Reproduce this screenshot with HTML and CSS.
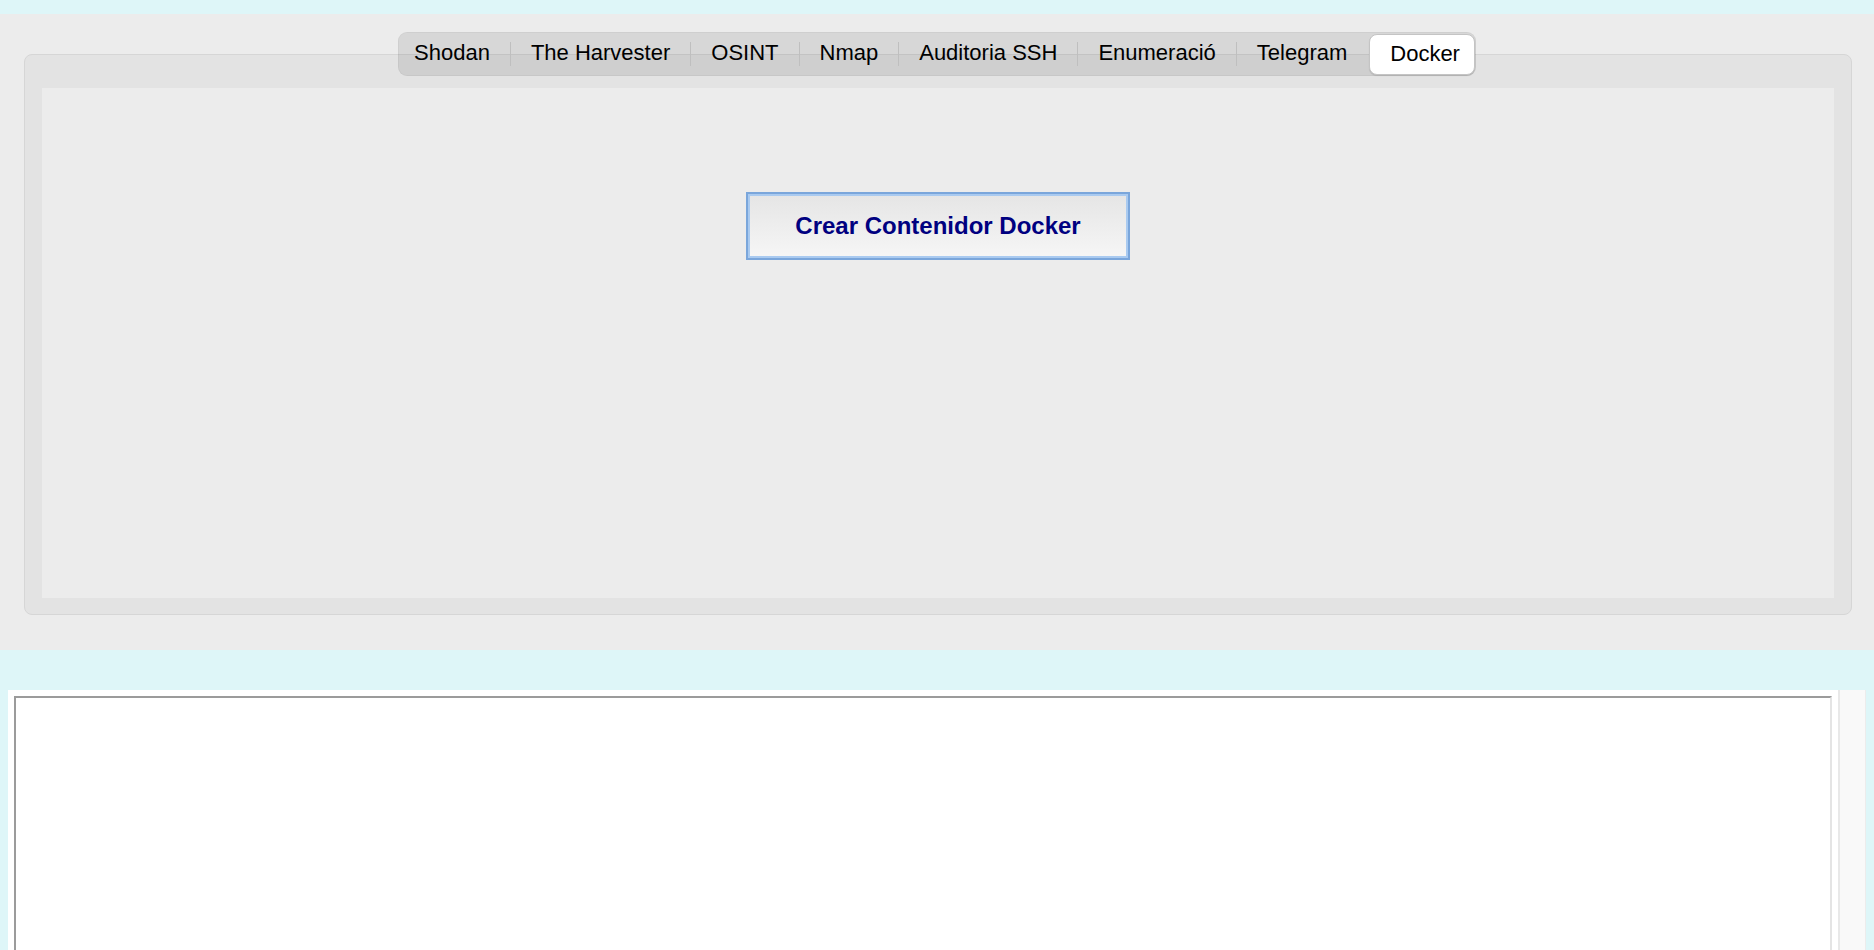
FILE: index.html
```html
<!DOCTYPE html>
<html lang="ca">
<head>
<meta charset="utf-8">
<title>Eines</title>
<link rel="stylesheet" href="styles.css">
</head>
<body>
<section class="tools">
  <nav class="tabbar">
    <div class="tab first">Shodan</div>
    <div class="tab">The Harvester</div>
    <div class="tab">OSINT</div>
    <div class="tab">Nmap</div>
    <div class="tab">Auditoria SSH</div>
    <div class="tab">Enumeració</div>
    <div class="tab">Telegram</div>
    <div class="tab selected">Docker</div>
  </nav>
  <div class="frame">
    <div class="pane">
      <button class="action">Crear Contenidor Docker</button>
    </div>
  </div>
</section>
<section class="output">
  <div class="outbox">
    <textarea class="log"></textarea>
  </div>
  <div class="scroll"></div>
</section>
</body>
</html>
```
FILE: styles.css
```css
html, body {
  height: 100%;
  overflow: hidden;
}
body {
  margin: 0;
  background: #def6f8;
  font-family: "Liberation Sans", Arial, sans-serif;
}
.tools {
  margin-top: 14px;
  height: 636px;
  box-sizing: border-box;
  background: #ececec;
  padding: 18px 22px 35px 24px;
  display: flex;
  flex-direction: column;
}
.tabbar {
  align-self: center;
  display: flex;
  align-items: center;
  height: 44px;
  box-sizing: border-box;
  margin-bottom: -22px;
  margin-right: 2px;
  position: relative;
  z-index: 1;
  background: rgba(0, 0, 0, 0.085);
  border: 1px solid rgba(0, 0, 0, 0.04);
  border-radius: 9px;
}
.tab {
  font-size: 22px;
  color: #000;
  padding: 0 20px 0 20px;
  height: 24px;
  line-height: 21px;
  border-left: 1px solid #bfbfbf;
}
.tab.first {
  border-left: none;
  padding-left: 15px;
}
.tab.selected {
  height: 41px;
  line-height: 37px;
  box-sizing: border-box;
  background: #fff;
  border: 1px solid #c4c4c4;
  border-radius: 8px;
  box-shadow: 0 1px 1px rgba(0, 0, 0, 0.12);
  margin-left: 2px;
  padding: 0 14px 0 20px;
}
.frame {
  height: 561px;
  box-sizing: border-box;
  background: #e3e3e3;
  border: 1px solid #d6d6d6;
  border-radius: 8px;
  padding: 33px 17px 16px 17px;
  display: flex;
}
.pane {
  flex: 1;
  background: #ececec;
  display: flex;
  flex-direction: column;
  align-items: center;
  padding-top: 104px;
}
.action {
  width: 384px;
  height: 68px;
  box-sizing: border-box;
  border: 2px solid #7aa6db;
  box-shadow: inset 0 0 0 2px #a9caf0;
  background: linear-gradient(#e5e5e5, #f6f6f6);
  font-family: "Liberation Sans", Arial, sans-serif;
  font-weight: bold;
  font-size: 24px;
  color: #000080;
  padding: 0;
}
.output {
  margin-top: 40px;
  display: flex;
  padding: 0 8px;
  height: 300px;
}
.outbox {
  width: 1830px;
  background: #fff;
  padding: 6px 6px 0 6px;
  box-sizing: border-box;
  display: flex;
}
.log {
  flex: 1;
  margin: 0;
  border-top: 2px solid #9b9b9b;
  border-left: 2px solid #9b9b9b;
  border-right: 2px solid #e4e4e4;
  border-bottom: 2px solid #e4e4e4;
  background: #fff;
  resize: none;
  outline: none;
}
.scroll {
  width: 28px;
  box-sizing: border-box;
  background: #f9f9f9;
  border-left: 2px solid #e8e8e8;
  border-right: 1px solid #ececec;
}
```
